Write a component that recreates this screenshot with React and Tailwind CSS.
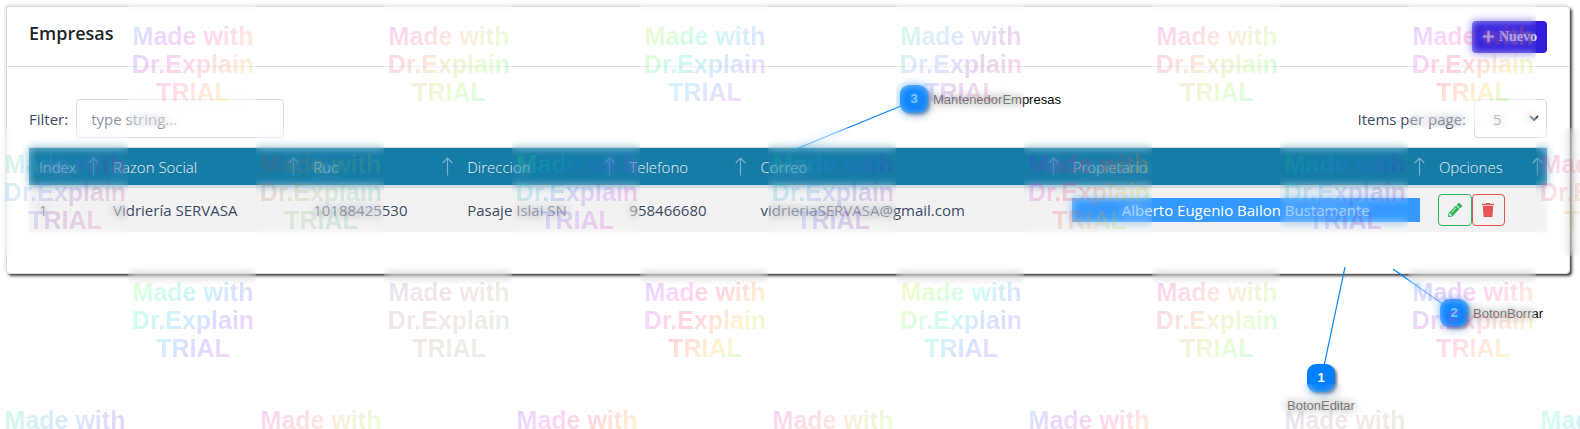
import React from "react";
import { FaPencilAlt, FaPlus } from "react-icons/fa";

const columns = [
  { name: "Index", width: "w-[74px]" },
  { name: "Razon Social", width: "w-[200px]" },
  { name: "Ruc", width: "w-[154px]" },
  { name: "Direccion", width: "w-[162px]" },
  { name: "Telefono", width: "w-[131px]" },
  { name: "Correo", width: "w-[312px]" },
  { name: "Propietario", width: "w-[366px]" },
  { name: "Opciones", width: "w-[118px]" },
];

const rows = [
  ["1", "Vidriería SERVASA", "10188425530", "Pasaje Islai SN", "958466680", "vidrieriaSERVASA@gmail.com"],
];

const tints = {
  blue: "bg-[linear-gradient(135deg,#00a0ff_8%,#8020ff_28%,#ff20a0_50%,#ff8040_70%,#e0ff00_92%)]",
  pink: "bg-[linear-gradient(135deg,#c000c0_8%,#ff3080_28%,#e0a030_52%,#80ff20_72%,#00e0a0_92%)]",
  yellow: "bg-[linear-gradient(135deg,#e0c020_8%,#50ff20_28%,#00e0b0_44%,#3080ff_66%,#e020e0_92%)]",
  green: "bg-[linear-gradient(135deg,#20e060_8%,#30b0d0_28%,#6080ff_44%,#9020b0_64%,#ff5080_90%)]",
  violet: "bg-[linear-gradient(135deg,#2020ff_8%,#e020ff_28%,#ff2040_50%,#ffc000_72%,#20ff20_92%)]",
  mint: "bg-[linear-gradient(135deg,#20ff40_8%,#00e0c0_28%,#3060ff_50%,#c020ff_72%,#ff2090_92%)]",
  teal: "bg-[linear-gradient(135deg,#00e060_8%,#00c0c0_28%,#3080ff_48%,#6020d0_70%,#e02090_92%)]",
  lime: "bg-[linear-gradient(135deg,#a0ff00_8%,#00ff90_28%,#00a0ff_52%,#5030ff_70%,#ff20c0_92%)]",
  orange: "bg-[linear-gradient(135deg,#ffb000_8%,#80ff00_28%,#00ffb0_48%,#2060ff_70%,#e020ff_92%)]",
  earth: "bg-[linear-gradient(135deg,#c03060_8%,#b06040_28%,#90b050_50%,#50c080_70%,#40a0a0_92%)]",
  gray: "bg-[linear-gradient(135deg,#7060c0_8%,#a070a0_28%,#c08070_52%,#90a070_72%,#60b090_92%)]",
};

const stampRows = [
  { shift: true, stamps: ["blue", "pink", "yellow", "green", "pink", "violet"] },
  { shift: false, stamps: ["green", "earth", "mint", "teal", "violet", "teal", "pink"] },
  { shift: true, stamps: ["lime", "gray", "violet", "orange", "pink", "blue"] },
  { shift: false, stamps: ["teal", "pink", "violet", "pink", "blue", "gray", "mint"] },
];

function Stamp({ tint }) {
  return (
    <div className="relative mr-32 h-32 w-32 shrink-0">
      <div className="absolute inset-0 opacity-60 backdrop-blur-[4px]" />
      <div
        className={
          "relative bg-clip-text pt-[22px] pl-[2px] text-center font-['Liberation_Sans',Arial,sans-serif] text-[25px] leading-7 font-bold text-transparent opacity-[0.18] " +
          tints[tint]
        }
      >
        Made with
        <br />
        Dr.Explain
        <br />
        TRIAL
      </div>
    </div>
  );
}

function Watermark() {
  return (
    <div aria-hidden="true" className="pointer-events-none absolute inset-0 overflow-hidden">
      {stampRows.map((row, i) => (
        <div key={i} className={row.shift ? "flex pl-32" : "flex"}>
          {row.stamps.map((tint, j) => (
            <Stamp key={j} tint={tint} />
          ))}
        </div>
      ))}
    </div>
  );
}

function SortArrow() {
  return (
    <svg viewBox="0 0 11 19" className="h-[19px] w-[11px] shrink-0 opacity-40" fill="none" stroke="white" strokeWidth="1.2">
      <path d="M5.5 18.5V1M.7 6l4.8-5 4.8 5" />
    </svg>
  );
}

function TrashIcon() {
  return (
    <svg viewBox="0 0 12 14" className="h-[14px] w-3" fill="currentColor">
      <path d="M4 0h4v.8h4v1.4H0V.8h4zM.8 3h10.4l-.8 11H1.6z" />
    </svg>
  );
}

function Badge({ n, className }) {
  return (
    <div
      className={
        "absolute flex size-[28px] items-center justify-center rounded-[9px] bg-[#0080ff] text-[13px] font-bold text-white shadow-[2px_2px_3px_rgba(0,0,0,0.55)] " +
        className
      }
    >
      {n}
    </div>
  );
}

function Callouts() {
  return (
    <div className="pointer-events-none absolute inset-0 font-['Liberation_Sans',Arial,sans-serif] text-[13px] leading-4 text-black">
      <svg className="absolute inset-0 h-full w-full" stroke="#0080ff" strokeWidth="1.2">
        <line x1="901" y1="106" x2="796" y2="149" />
        <line x1="1345" y1="267" x2="1324" y2="366" />
        <line x1="1393" y1="269" x2="1444" y2="305" />
      </svg>
      <Badge n="3" className="top-[85px] left-[900px]" />
      <span className="absolute top-[92px] left-[933px]">MantenedorEmpresas</span>
      <Badge n="2" className="top-[299px] left-[1440px]" />
      <span className="absolute top-[306px] left-[1473px]">BotonBorrar</span>
      <Badge n="1" className="top-[364px] left-[1307px]" />
      <span className="absolute top-[398px] left-[1287px]">BotonEditar</span>
    </div>
  );
}

export default function App() {
  return (
    <div className="relative min-h-screen overflow-hidden bg-white pt-[6px] pr-[10px] pl-[6px] font-['Open_Sans','Noto_Sans',sans-serif] text-[15px] leading-6 text-[#3c4b64]">
      <main className="rounded border border-[#d8dbe0] bg-white shadow-[-1px_-1px_0_1px_#ebedef,2px_2px_3px_rgba(0,0,0,0.75)]">
        <header className="flex h-[60px] items-center justify-between border-b border-[#d8dbe0] px-[22px]">
          <h1 className="pb-2 text-lg font-semibold text-[#212529]">Empresas</h1>
          <button className="flex h-8 items-center gap-1 rounded bg-[#321fdb] px-[10px] font-['Liberation_Serif',serif] text-[14px] font-bold text-white">
            <FaPlus className="size-[13px]" />
            Nuevo
          </button>
        </header>
        <div className="px-[22px] pt-8 pb-[41px]">
          <div className="mb-[9px] flex items-center justify-between">
            <div className="flex items-center gap-2">
              <label htmlFor="filter">Filter:</label>
              <input
                id="filter"
                type="text"
                placeholder="type string..."
                className="h-[39px] w-52 rounded border border-[#d8dbe0] bg-white px-[14px] placeholder:text-[#8a93a2]"
              />
            </div>
            <div className="flex items-center gap-2">
              <label htmlFor="per-page">Items per page:</label>
              <div className="relative">
                <select
                  id="per-page"
                  defaultValue="5"
                  className="h-[39px] w-[73px] appearance-none rounded border border-[#d8dbe0] bg-white px-[18px] text-[#768192]"
                >
                  <option>5</option>
                  <option>10</option>
                  <option>20</option>
                </select>
                <svg viewBox="0 0 10 6" className="absolute top-4 right-2 h-[6px] w-[10px]" fill="none" stroke="#3c4b64" strokeWidth="2">
                  <path d="M1 1l4 4 4-4" />
                </svg>
              </div>
            </div>
          </div>
          <table className="w-full table-fixed border-collapse text-left">
            <thead>
              <tr className="h-[39px] border-t border-b-[3px] border-[#d8dbe0] bg-[#157ca8] text-[#ebedef]">
                {columns.map((c) => (
                  <th key={c.name} className={"py-0 pr-1 pl-[10px] font-light " + c.width}>
                    <div className="flex items-center justify-between">
                      {c.name}
                      <SortArrow />
                    </div>
                  </th>
                ))}
              </tr>
            </thead>
            <tbody>
              {rows.map((r) => (
                <tr key={r[0]} className="h-[45px] bg-[#f2f2f2]">
                  {r.map((cell) => (
                    <td key={cell} className="pl-[10px]">
                      {cell}
                    </td>
                  ))}
                  <td className="px-[9px]">
                    <div className="bg-[#3399ff] text-center text-white">Alberto Eugenio Bailon Bustamante</div>
                  </td>
                  <td className="pl-[9px]">
                    <div className="flex">
                      <button aria-label="Editar" className="flex h-8 w-[34px] items-center justify-center rounded border border-[#2eb85c] text-[#2eb85c]">
                        <FaPencilAlt className="size-[14px]" />
                      </button>
                      <button aria-label="Borrar" className="flex h-8 w-[33px] items-center justify-center rounded border border-[#e55353] text-[#e55353]">
                        <TrashIcon />
                      </button>
                    </div>
                  </td>
                </tr>
              ))}
            </tbody>
          </table>
        </div>
      </main>
      <Callouts />
      <Watermark />
    </div>
  );
}
